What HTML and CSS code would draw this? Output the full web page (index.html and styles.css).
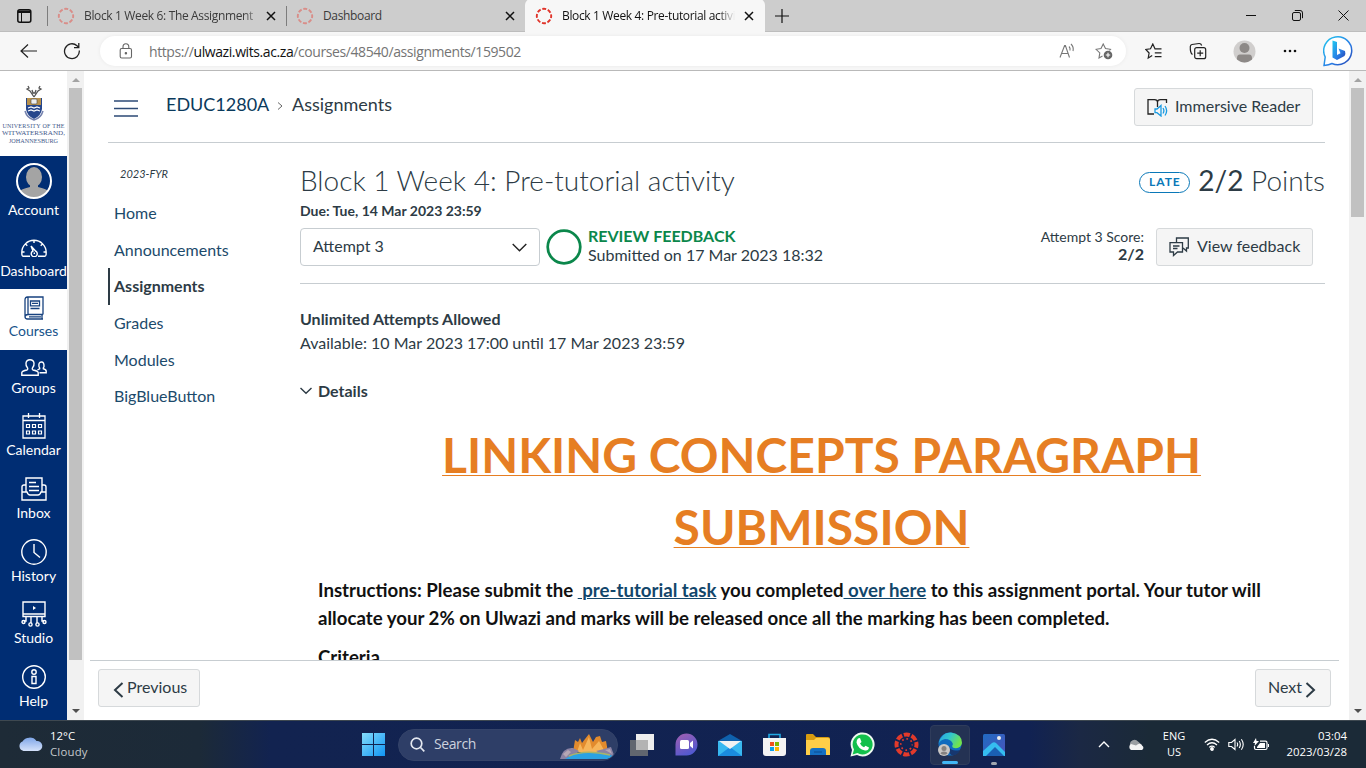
FILE: index.html
```html
<!DOCTYPE html>
<html lang="en">
<head>
<meta charset="utf-8">
<title>Block 1 Week 4: Pre-tutorial activity</title>
<link rel="stylesheet" href="styles.css">
</head>
<body>
<svg width="0" height="0" class="defs">
  <defs>
    <symbol id="x" viewBox="0 0 10 10"><path d="M1 1L9 9M9 1L1 9" fill="none" stroke="#111" stroke-width="1.5"/></symbol>
    <symbol id="ring" viewBox="0 0 18 18"><circle cx="9" cy="9" r="7.2" fill="none" stroke="currentColor" stroke-width="1.9" stroke-dasharray="3.9 1.75" stroke-dashoffset="1.9"/></symbol>
    <symbol id="up" viewBox="0 0 8 4"><path d="M0 4L4 0L8 4Z" fill="#a3a3a3"/></symbol>
    <symbol id="down" viewBox="0 0 8 4"><path d="M0 0L4 4L8 0Z" fill="#505050"/></symbol>
  </defs>
</svg>

<div class="tabs">
  <div class="tab-menu"><svg width="15" height="14" viewBox="0 0 15 14"><rect x=".8" y=".8" width="13" height="12.4" rx="2" fill="none" stroke="#111" stroke-width="1.5"/><path d="M1 1.5H14V4H1Z" fill="#111"/><path d="M4.5 4V13" stroke="#111"/></svg></div>
  <div class="sep"></div>
  <div class="tab"><svg class="fav pale" width="18" height="18"><use href="#ring"/></svg><span class="tab-title t1">Block 1 Week 6: The Assignment</span><svg width="10" height="10"><use href="#x"/></svg></div>
  <div class="sep"></div>
  <div class="tab"><svg class="fav pale" width="18" height="18"><use href="#ring"/></svg><span class="tab-title t2">Dashboard</span><svg width="10" height="10"><use href="#x"/></svg></div>
  <div class="tab active"><svg class="fav" width="18" height="18"><use href="#ring"/></svg><span class="tab-title t3">Block 1 Week 4: Pre-tutorial activity</span><svg width="10" height="10"><use href="#x"/></svg></div>
  <div class="plus"><svg width="14" height="14"><path d="M7 0V14M0 7H14" stroke="#111" stroke-width="1.2"/></svg></div>
  <div class="win">
    <span><svg width="10" height="10"><path d="M0 5.5H10" stroke="#111"/></svg></span>
    <span><svg width="11" height="11" fill="none" stroke="#111"><rect x=".5" y="2.5" width="8" height="8" rx="1.5"/><path d="M2.8 .5H8A2.4 2.4 0 0 1 10.500 3V8.200"/></svg></span>
    <span><svg width="11" height="11"><path d="M.5 .5L10.500 10.500M10.500 .5L.5 10.500" stroke="#111"/></svg></span>
  </div>
</div>

<div class="toolbar">
  <span class="btn"><svg width="17" height="14" fill="none" stroke="#222" stroke-width="1.2"><path d="M17 7H1M8 .5L1 7L8 13.500"/></svg></span>
  <span class="btn"><svg width="18" height="18" fill="none" stroke="#222" stroke-width="1.3"><path d="M16.300 8.500A7.400 7.400 0 1 1 14 3.800L15.800 5.500M15.800 1V5.700H11"/></svg></span>
  <div class="address">
    <svg width="14" height="16" fill="none" stroke="#666" stroke-width="1.1"><rect x="1.200" y="5.500" width="11.300" height="9.500" rx="1.500"/><path d="M4 5.500V4A2.900 3.200 0 0 1 9.800 4V5.500"/><circle cx="6.900" cy="10.200" r=".7" fill="#444"/></svg>
    <span class="url">https://<b>ulwazi.wits.ac.za</b>/courses/48540/assignments/159502</span>
    <svg class="aloud" width="17" height="16" fill="none" stroke="#777" stroke-width="1.100"><path d="M1 14.500L5.600 2.500H6.400L10.500 14.500M2.500 10.500H9.200M10 3.500Q11.500 5 11 7.500M12 1Q15 4 14 8"/></svg>
    <svg width="18" height="17" fill="none" stroke="#777" stroke-width="1.100"><path d="M7.500 13L4 15L4.800 9.900L1 6.300L6 5.500L8.200 1L10.500 5.500L15.500 6.300L14.500 7.500"/><circle cx="13" cy="12" r="4.300" fill="#666" stroke="none"/><path d="M13 9.800V14.200M10.800 12H15.200" stroke="#fff"/></svg>
  </div>
  <span class="btn b1"><svg width="18" height="17" fill="none" stroke="#222" stroke-width="1.200"><path d="M7.200 12.500L3.200 15L4.100 10L.8 6.500L5.500 5.800L7.800 1L10 5.800H16.500M9.800 9.800H16.500M9.800 13.600H16.500"/></svg></span>
  <span class="btn"><svg width="18" height="18" fill="none" stroke="#222" stroke-width="1.200"><rect x="5.700" y="5.700" width="11" height="11" rx="2"/><path d="M11.200 8.200V14.200M8.200 11.200H14.200M3.500 12.500Q1 11 1.300 4.500Q1.500 2.800 3 2.500L10 1.500Q12 1.300 12.700 3.500"/></svg></span>
  <span class="btn b2"><svg width="23" height="23"><circle cx="11.500" cy="11.500" r="11" fill="#d0cecd"/><circle cx="11.500" cy="8" r="5" fill="#8d8987"/><path d="M4 19.500Q3.500 14.500 7 14.500H16Q19.500 14.500 19 19.500Q11.500 25.500 4 19.500Z" fill="#8d8987"/></svg></span>
  <span class="btn b2"><svg width="14" height="4" fill="#111"><circle cx="2" cy="2" r="1.300"/><circle cx="7" cy="2" r="1.300"/><circle cx="12" cy="2" r="1.300"/></svg></span>
  <span class="btn b4"><svg width="31" height="32"><defs><linearGradient id="bg" x1="0" y1="0" x2="1" y2="1"><stop offset="0" stop-color="#21c8ef"/><stop offset=".6" stop-color="#2a7de5"/><stop offset="1" stop-color="#243fae"/></linearGradient></defs><path d="M1 30.500L2.200 22A14 14 0 1 1 9 28.500Q6 30 1 30.500Z" fill="#fff" stroke="url(#bg)" stroke-width="1.500"/><path d="M9.500 5.500L14 7V20L17.500 18.300L15.500 13.500L22 16Q23 19 21.500 21L14 25L9.500 22.500Z" fill="url(#bg)"/></svg></span>
</div>

<div class="page">
  <nav class="global">
    <div class="logo">
      <svg width="20" height="36" viewBox="0 0 20 36"><path d="M10 12L6 6L3 4L5 3L4 1M10 12L14 6L17 4L15 3L16 1M8 5L9 8H11L12 5" fill="none" stroke="#555" stroke-width="1.300"/><path d="M2 13H18V24Q17 31 10 34Q3 31 2 24Z" fill="#26468c"/><path d="M3 13H17V20H3Z" fill="#b8914b"/><rect x="7" y="14" width="6" height="5" rx="1" fill="#eee" stroke="#444" stroke-width=".6"/><path d="M4 23L7 22L10 23L13 22L16 23M4 26L7 25L10 26L13 25L16 26" fill="none" stroke="#fff" stroke-width="1.200"/><path d="M1 26Q3 33 10 35Q17 33 19 26" fill="none" stroke="#7380ad" stroke-width="1.500"/></svg>
      <span class="l1">UNIVERSITY OF THE</span><span class="l2">WITWATERSRAND,</span><span class="l3">JOHANNESBURG</span>
    </div>
    <div class="item account"><svg width="36" height="36"><defs><clipPath id="av"><circle cx="18" cy="18" r="16.500"/></clipPath></defs><circle cx="18" cy="18" r="17" fill="#002d73"/><g clip-path="url(#av)" fill="#a4a4a4"><ellipse cx="18" cy="14" rx="8" ry="10"/><path d="M14 20H22V24Q32 26 34 30V36H2V30Q4 26 14 24Z"/></g><circle cx="18" cy="18" r="17" fill="none" stroke="#fff" stroke-width="2"/></svg><span>Account</span></div>
    <div class="item dash"><svg width="26" height="18" fill="none" stroke="#fff" stroke-width="1.400"><path d="M9 17.200H2Q.8 17.200.8 13.500A12.200 12.200 0 0 1 25.200 13.500Q25.200 17.200 24 17.200H17M13 1V4M4.500 5L6.300 6.800M21.500 5L19.700 6.800M1 13H3.500M22.500 13H25M10 7L12 12A3 3 0 1 0 14.500 12L10 7M13.300 13.500V15"/></svg><span>Dashboard</span></div>
    <div class="item courses"><svg width="20" height="24" fill="none" stroke="#17427f" stroke-width="1.300"><path d="M19 18.500V1H3.500Q1 1 1 4V20.500Q1 23 3.500 23H19M1 20.500Q1.500 18.500 4 18.500H19M18 18.500V23M4 1V18M6.500 5H15.500V9.800H6.500ZM6.500 12.500H15.500M8 7.400H14M5 20.800H17"/></svg><span>Courses</span></div>
    <div class="item groups"><svg width="26" height="17" fill="none" stroke="#fff" stroke-width="1.400"><path d="M.8 16.200V13.500Q1 12 6 11Q7.500 10 6 8Q4.800 6.500 5 4Q5.500.8 9 .8T13 4Q13.200 6.500 12 8Q10.500 10 12 11Q17 12 17.200 13.500V16.200ZM16.500 10.800L18.700 9.800Q18.900 9 18 7.600Q17.300 3.200 20.300 3T23 7.600Q22 9 22.300 9.800Q25.200 10.500 25.200 12.200V13.800H18.500"/></svg><span>Groups</span></div>
    <div class="item cal"><svg width="24" height="26" fill="none" stroke="#fff" stroke-width="1.300"><path d="M1 3H23V25H1ZM1 7.500H23M6.500 0V5M17.500 0V5"/><path d="M4.500 11.500H7.500V14.500H4.500ZM10.500 11.500H13.500V14.500H10.500ZM16.500 11.500H19.500V14.500H16.500ZM4.500 18H7.500V21H4.500ZM10.500 18H13.500V21H10.500ZM16.500 18H19.500V21H16.500Z" stroke-width="1.200"/></svg><span>Calendar</span></div>
    <div class="item inbox"><svg width="26" height="24" fill="none" stroke="#fff" stroke-width="1.400"><path d="M5 15V1H21V15M5 8H3Q1 8 1 10V23H25V10Q25 8 23 8H21M1 15H6Q7 18 9 18H17Q19 18 20 15H25M8 5.500H15M8 9.500H18M8 13.500H18"/></svg><span>Inbox</span></div>
    <div class="item hist"><svg width="26" height="26" fill="none" stroke="#fff" stroke-width="1.400"><circle cx="13" cy="13" r="12.200"/><path d="M13 5V13.500L19 18.500"/></svg><span>History</span></div>
    <div class="item studio"><svg width="26" height="26" fill="none" stroke="#fff" stroke-width="1.400"><path d="M2 1H24V15.500H2ZM2 13H24M10 16V22M16 16V22M5 16V20H3M21 16V20H23"/><circle cx="2.500" cy="21" r="1.500"/><circle cx="9.500" cy="23.500" r="1.600"/><circle cx="16.500" cy="23.500" r="1.600"/><circle cx="23.500" cy="21" r="1.500"/><path d="M12 5L15 7L12 9Z" fill="#fff" stroke="none"/></svg><span>Studio</span></div>
    <div class="item help"><svg width="26" height="24" fill="none" stroke="#fff" stroke-width="1.400"><circle cx="13" cy="12" r="11.300"/><circle cx="13" cy="7" r="2.200"/><path d="M11 11.500H15V18.500H11Z"/></svg><span>Help</span></div>
  </nav>
  <div class="scroll left"><svg width="8" height="4"><use href="#up"/></svg><div class="thumb"></div><svg width="8" height="4"><use href="#down"/></svg></div>

  <main>
    <div class="view">
      <header class="crumbs">
        <svg class="burger" width="24" height="17"><path d="M0 1H24M0 8.500H24M0 16H24" stroke="#2d4a75" stroke-width="1.600"/></svg>
        <span class="crumb c1">EDUC1280A</span>
        <svg class="chev" width="6" height="8" fill="none" stroke="#666"><path d="M1 .5L5 4L1 7.500"/></svg>
        <span class="crumb c2">Assignments</span>
        <button class="button reader"><svg width="21" height="19" fill="none"><path d="M10.500 4Q10.500 1.700 7.500 1.700H1V16H7M10.500 9V4Q10.500 1.700 13.500 1.700H19.500V5" stroke="#222" stroke-width="1.300"/><path d="M8 11H10L14 7.500V18L10 14.700H8ZM16 10Q17.800 12.700 16 15.500M18 8Q21.300 12.700 18 17.500" stroke="#199be2" stroke-width="1.300"/></svg><span>Immersive Reader</span></button>
      </header>
      <div class="cols">
        <aside>
          <div class="term">2023-FYR</div>
          <a>Home</a><a>Announcements</a><a class="on">Assignments</a><a>Grades</a><a>Modules</a><a>BigBlueButton</a>
        </aside>
        <section>
          <div class="head">
            <h1>Block 1 Week 4: Pre-tutorial activity</h1>
            <div class="points"><span class="late">LATE</span><span class="score"><b>2/2</b> Points</span></div>
          </div>
          <div class="due">Due: Tue, 14 Mar 2023 23:59</div>
          <div class="status">
            <div class="select"><span>Attempt 3</span><svg width="15" height="9" fill="none" stroke="#222" stroke-width="1.400"><path d="M.7 1L7.500 7.800L14.300 1"/></svg></div>
            <svg class="circle" width="36" height="36"><circle cx="18" cy="18" r="16.300" fill="none" stroke="#0b874b" stroke-width="2.700"/></svg>
            <div class="review"><b>REVIEW FEEDBACK</b><span>Submitted on 17 Mar 2023 18:32</span></div>
            <div class="attempt"><span>Attempt 3 Score:</span><b>2/2</b></div>
            <button class="button feedback"><svg width="20" height="20" fill="none" stroke="#2d3b45" stroke-width="1.300"><path d="M1 5.700H13.500V15H8.500L4.500 18.500V15H1ZM7.500 5V1H19.300V11H17.500V14L14 11M4 9H10.500M4 11.500H8.500"/></svg><span>View feedback</span></button>
          </div>
          <div class="allowed">Unlimited Attempts Allowed</div>
          <div class="avail">Available: 10 Mar 2023 17:00 until 17 Mar 2023 23:59</div>
          <div class="details"><svg width="12" height="8" fill="none" stroke="#2d3b45" stroke-width="1.400"><path d="M.5 1L6 6.300L11.500 1"/></svg><b>Details</b></div>
          <article>
            <h2><span>LINKING CONCEPTS PARAGRAPH</span><br><span>SUBMISSION</span></h2>
            <p><span>Instructions: Please submit the <a>&nbsp;pre-tutorial task</a> you completed<a> over here</a> to this assignment portal. Your tutor will</span><br><span>allocate your 2% on Ulwazi and marks will be released once all the marking has been completed.</span></p>
            <p class="criteria">Criteria</p>
          </article>
        </section>
      </div>
    </div>
    <footer>
      <button class="button prev"><svg width="11" height="16" fill="none" stroke="#2d3b45" stroke-width="2"><path d="M9.500 1L2 8L9.500 15"/></svg><span>Previous</span></button>
      <button class="button next"><span>Next</span><svg width="11" height="16" fill="none" stroke="#2d3b45" stroke-width="2"><path d="M1.500 1L9 8L1.500 15"/></svg></button>
    </footer>
  </main>
  <div class="scroll right"><svg width="8" height="4"><use href="#up"/></svg><div class="thumb"></div><svg width="8" height="4"><use href="#down"/></svg></div>
</div>

<div class="taskbar">
  <svg class="weather" width="25" height="17"><defs><linearGradient id="cl" x1="0" y1="0" x2="0" y2="1"><stop offset="0" stop-color="#7fa6e8"/><stop offset="1" stop-color="#d5e2fa"/></linearGradient></defs><path d="M5.500 16A5 5 0 0 1 4.500 6.500A8 7 0 0 1 18.500 6A5 5 0 0 1 20 16Z" fill="url(#cl)"/></svg>
  <div class="temp"><span>12°C</span><span class="dim">Cloudy</span></div>
  <svg class="start" width="23" height="23"><defs><linearGradient id="wn" gradientUnits="userSpaceOnUse" x1="0" y1="0" x2="23" y2="23"><stop offset="0" stop-color="#85ddfb"/><stop offset="1" stop-color="#1095f5"/></linearGradient></defs><path d="M0 0H11V11H0ZM12 0H23V11H12ZM0 12H11V23H0ZM12 12H23V23H12Z" fill="url(#wn)"/></svg>
  <div class="search"><svg width="15" height="15" fill="none" stroke="#e4e8f0" stroke-width="1.700"><circle cx="6.500" cy="6.500" r="5.300"/><path d="M10.500 10.500L14.300 14.300"/></svg><span>Search</span>
    <svg class="art" width="54" height="25"><path d="M13 18L15 6L18 8L20 4L22 9L25 5L29 0L33 8L36 3L40 2L42 8L46 7L48 18Z" fill="#e28b2d"/><path d="M17 18L20 9L23 16L29 3L32 15L39 7L45 18Z" fill="#f6b55a"/><path d="M0 25Q3 13 13 14L19 17L11 25ZM36 17L44 15L51 13L54 21L50 24Z" fill="#8b82a3"/><path d="M3 20L8 16L11 18L6 23ZM45 16L50 15L52 20Z" fill="#b6a7b4"/><path d="M5 25Q16 17 32 18Q45 18 53 22L48 25Z" fill="#2aa2e4"/><path d="M9 22Q25 15 50 21" fill="none" stroke="#a9b36b" stroke-width="1.500"/></svg>
  </div>
  <div class="apps">
    <span><svg width="24" height="22"><path d="M6 0H24V16H6Z" fill="#eee"/><path d="M0 6H18V22H0Z" fill="#707274" opacity=".85"/><path d="M6 6H18V16H6Z" fill="#b3b3b3"/></svg></span>
    <span><svg width="23" height="23"><defs><linearGradient id="ch" x1="0" y1="0" x2=".5" y2="1"><stop offset="0" stop-color="#a45fb0"/><stop offset="1" stop-color="#5259cf"/></linearGradient></defs><path d="M.5 22.500V11.500A11 11 0 1 1 11.500 22.500Z" fill="url(#ch)"/><rect x="5" y="7" width="9" height="9" rx="1.500" fill="#fff"/><path d="M15 10L18 7.500V15.500L15 13Z" fill="#fff"/></svg></span>
    <span><svg width="24" height="22"><path d="M0 7L12 0L24 7V12H0Z" fill="#0f61ad"/><path d="M0 7H24V22H0Z" fill="#38b8f0"/><path d="M0 22L12 13L24 22Z" fill="#1a8bdf"/><path d="M1 7H23L12 15Z" fill="#f2f2f2"/></svg></span>
    <span><svg width="23" height="23"><path d="M6 5V1.500H17V5" fill="none" stroke="#21a8e3" stroke-width="1.600"/><path d="M0 5H23V20Q23 23 20 23H3Q0 23 0 20Z" fill="#f3f3f3"/><path d="M7 9H11V13H7Z" fill="#f0501e"/><path d="M12 9H16V13H12Z" fill="#7db801"/><path d="M7 14H11V18H7Z" fill="#08a1ec"/><path d="M12 14H16V18H12Z" fill="#fdb500"/></svg></span>
    <span><svg width="24" height="22"><path d="M0 1Q0 0 1 0H7L10 3H22Q24 3 24 5V10H0Z" fill="#d79b10"/><path d="M0 6H8L10 4H22Q24 4 24 6V21H0Z" fill="#ffce48"/><path d="M4 21V17Q4 14 7 14H17Q20 14 20 17V21Z" fill="#1570c3"/><path d="M8 18H16" stroke="#0c4d91"/></svg></span>
    <span><svg width="25" height="25"><path d="M.5 24.500L2 18A12 12 0 1 1 7 23Z" fill="#eef8f0"/><path d="M2.600 22.400L4 17.500A10 10 0 1 1 7.500 21Z" fill="#12c04b"/><path d="M8 6.500L10 6L11.500 10L10 11.500Q11.500 14.500 14 15.200L15.500 13.700L19 15.500Q18.500 19 15 18.500Q8 17 6.500 10.500Q6.500 8 8 6.500Z" fill="#fff"/></svg></span>
    <span><svg width="25" height="25" fill="none" stroke="#e23a2b"><circle cx="12.500" cy="12.500" r="10" stroke-width="4" stroke-dasharray="6.100 1.754" stroke-dashoffset="3"/><circle cx="12.500" cy="12.500" r="5.700" stroke-width="1.700" stroke-dasharray="1.700 2.776" stroke-dashoffset=".8"/></svg></span>
    <span class="live"><svg width="26" height="25"><defs><linearGradient id="eg" x1="0" y1="0" x2="1" y2=".4"><stop offset="0" stop-color="#2b9ee4"/><stop offset=".5" stop-color="#31c5cd"/><stop offset="1" stop-color="#72e34c"/></linearGradient></defs><circle cx="13" cy="12" r="11.500" fill="#0f6abe"/><path d="M1.500 12Q4 0 14 .5Q25 2 25 11Q24 17 17 16Q14 15 16 12Q14 7 8 7Q3 8 1.500 12Z" fill="url(#eg)"/><path d="M12 15Q15 20 23 18Q21 23 15 23.500Q11 21 12 15Z" fill="#17376f"/><circle cx="7" cy="18" r="6" fill="#c9c7c5"/><circle cx="7" cy="16.500" r="2.500" fill="#858280"/><path d="M3.500 21.500Q4 19.500 7 19.500T10.500 21.500Q7 24 3.500 21.500Z" fill="#858280"/></svg><i></i></span>
    <span class="idle"><svg width="22" height="22"><defs><linearGradient id="ph" x1="0" y1="0" x2="1" y2="1"><stop offset="0" stop-color="#206bc2"/><stop offset="1" stop-color="#4a53bb"/></linearGradient></defs><rect width="22" height="22" rx="1.500" fill="url(#ph)"/><path d="M0 17L9 9Q11 7.500 13 9L22 18V22H0Z" fill="#35bdf0"/><path d="M3 22L12 13L21 22Z" fill="#1a5fb4"/><circle cx="16" cy="4" r="2" fill="#eee"/></svg><i></i></span>
  </div>
  <svg class="caret" width="12" height="7" fill="none" stroke="#fff" stroke-width="1.400"><path d="M1 6L6 1L11 6"/></svg>
  <svg class="cloud" width="17" height="11"><path d="M3 6A4.500 4.500 0 0 1 11 2.500L15 6V9H3Z" fill="#9b9fa3"/><path d="M4 11A3.500 3.500 0 0 1 4 5L9 6.500Q13 3 15 6.500A2.500 2.500 0 0 1 15 11Z" fill="#f4f4f4"/></svg>
  <div class="lang"><span>ENG</span><span>US</span></div>
  <svg class="wifi" width="16" height="13" fill="none" stroke="#fff" stroke-width="1.200"><path d="M.8 4.500Q8-2 15.200 4.500M3 7Q8 2.500 13 7M5.200 9.400Q8 7 10.800 9.400"/><circle cx="8" cy="11" r="1.300" fill="#fff"/></svg>
  <svg class="vol" width="17" height="13" fill="none" stroke="#fff" stroke-width="1.100"><path d="M.8 4.500H3.500L7 1.500V11.500L3.500 8.500H.8ZM9 4.500Q10.300 6.500 9 8.500M11.200 3Q13.500 6.500 11.200 10M13.400 1.200Q17 6.500 13.400 11.800"/></svg>
  <svg class="bat" width="17" height="13" fill="none" stroke="#fff" stroke-width="1.200"><path d="M7 3.200H12.500Q14 3.200 14 5V10Q14 11.500 12.500 11.500H3Q1.500 11.500 1.500 10V8"/><path d="M4 9V10H12V5H7ZM15 6H16V9H15ZM3 0L0 5H2L1.500 8L6 3H3.500Z" fill="#fff" stroke="none"/></svg>
  <div class="clock"><span>03:04</span><span>2023/03/28</span></div>
</div>
</body>
</html>
```

FILE: styles.css
```css
* { box-sizing: border-box; }
body { margin: 0; width: 1366px; height: 768px; overflow: hidden; display: flex; flex-direction: column; font-family: Lato, sans-serif; font-size: 16px; color: #2d3b45; background: #fff; }
svg { display: block; flex: none; }
.defs { position: absolute; }
span { white-space: nowrap; }

/* Browser tabs */
.tabs { height: 32px; flex: none; display: flex; align-items: center; background: #cdcdcd; border-bottom: 1px solid #bdbdbd; font: 12px "Open Sans", sans-serif; color: #3b3b3b; }
.tab-menu { width: 47px; padding-left: 17px; }
.sep { width: 1px; height: 20px; background: #7d7d7d; }
.tab { width: 238px; height: 32px; display: flex; align-items: center; padding: 0 10px 0 9px; }
.tab-title { flex: 1; margin: 0 9px 0 9px; overflow: hidden; letter-spacing: -0.35px; }
.t1 { mask-image: linear-gradient(90deg, #000 92%, rgba(0,0,0,.3) 100%); }
.t3 { mask-image: linear-gradient(90deg, #000 90%, transparent 100%); }
.fav { color: #e0342a; }
.pale { color: #d98d88; }
.active { width: 240px; height: 33px; background: #f7f7f7; border-radius: 6px 6px 0 0; color: #111; padding-left: 10px; padding-right: 11px; }
.plus { width: 34px; padding-left: 10px; }
.win { margin-left: auto; display: flex; }
.win span { width: 46px; display: flex; justify-content: center; }

/* Address bar */
.toolbar { height: 39px; flex: none; display: flex; align-items: center; background: #f7f7f7; border-bottom: 1px solid #b9b9b9; padding-left: 6px; }
.btn { width: 44px; display: flex; justify-content: center; }
.address { width: 1026px; height: 30px; margin-left: 6px; border-radius: 15px; background: #fff; box-shadow: 0 0 4px rgba(0,0,0,.06); display: flex; align-items: center; padding: 0 13px 0 19px; }
.url { margin-left: 16px; font: 14px "Open Sans", sans-serif; color: #747474; letter-spacing: -0.41px; }
.url b { font-weight: 400; color: #111; }
.aloud { margin-left: auto; margin-right: 19px; }
.b1 { margin-left: 6px; }
.b2 { margin-left: 2px; }
.b4 { margin-left: 4px; }

/* Page frame */
.page { height: 649px; flex: none; display: flex; }
.global { width: 67px; background: #002d73; color: #fff; flex: none; }
.logo { height: 85px; background: #fff; display: flex; flex-direction: column; align-items: center; padding-top: 14px; font-family: "Liberation Serif", serif; color: #44598a; line-height: 7px; }
.logo svg { margin-bottom: 2px; }
.l1 { font-size: 6px; letter-spacing: .25px; }
.l2 { font-size: 7.1px; }
.l3 { font-size: 6.2px; }
.item { display: flex; flex-direction: column; align-items: center; justify-content: flex-end; padding-bottom: 10px; height: 63px; font-size: 14px; line-height: 18px; }
.item svg { margin-bottom: 2px; }
.account { height: 73px; }
.dash { height: 60px; padding-bottom: 9px; }
.dash svg { margin-bottom: 5px; }
.courses { height: 61px; background: #fff; color: #17538a; }
.groups { height: 57px; }
.groups svg, .inbox svg, .help svg { margin-bottom: 3px; }
.cal, .studio { height: 62px; }
.scroll { width: 17px; background: #f1f1f1; display: flex; flex-direction: column; align-items: center; padding: 7px 0; flex: none; }
.thumb { width: 13px; height: 572px; margin: 6px 0 auto; background: #c1c1c1; }
.right .thumb { height: 129px; }

main { width: 1265px; display: flex; flex-direction: column; }
.view { height: 589px; overflow: hidden; padding: 0 24px; }
.crumbs { height: 72px; border-bottom: 1px solid #c7cdd1; display: flex; padding: 17px 12px 0 6px; }
.burger { margin-top: 12px; }
.crumb { font-size: 18px; line-height: 33px; }
.c1 { margin-left: 28px; width: 103px; color: #0a3a5c; }
.chev { margin: 14px 9px 0 8px; }
.button { font: 16px/20px Lato, sans-serif; color: #2d3b45; background: #f5f5f5; border: 1px solid #d6d9db; border-radius: 3px; height: 38px; display: flex; align-items: center; padding: 0; flex: none; }
.button span { padding-bottom: 2px; }
.reader { width: 179px; margin-left: auto; padding-left: 12px; }
.reader svg { margin-right: 7px; }
.cols { display: flex; }
aside { width: 192px; flex: none; padding-top: 22px; }
.term { font-size: 11px; font-style: italic; line-height: 18px; padding-left: 12px; margin-bottom: 12px; }
aside a { display: block; height: 36.7px; line-height: 36.2px; padding-left: 6px; color: #1c4a6b; }
aside a.on { border-left: 2px solid #2d3b45; padding-left: 4px; font-weight: 700; color: #2d3b45; }

/* Assignment */
section { width: 1025px; flex: none; }
.head { display: flex; justify-content: space-between; padding-top: 19px; height: 57px; }
h1 { margin: 0; font-size: 28px; font-weight: 300; line-height: 36px; white-space: nowrap; }
.points { display: flex; align-items: center; height: 36px; }
.late { width: 51px; height: 21px; margin: 5px 8px 0 0; border: 1px solid #0a78b8; border-radius: 11px; color: #0a78b8; font-size: 12px; font-weight: 700; line-height: 18px; text-align: center; letter-spacing: 1px; }
.score { font-size: 28px; font-weight: 300; }
.score b { font-weight: 400; }
.due { font-size: 14px; font-weight: 700; line-height: 22px; height: 28px; }
.status { height: 56px; display: flex; border-bottom: 1px solid #c7cdd1; padding-right: 12px; }
.select { width: 240px; height: 38px; border: 1px solid #c7cdd1; border-radius: 4px; display: flex; align-items: center; justify-content: space-between; padding: 0 12px; }
.select span { padding-bottom: 3px; }
.circle { margin: 1px 6px 0; }
.review { display: flex; flex-direction: column; line-height: 19px; margin-top: -2px; }
.review b { color: #0b874b; }
.attempt { margin: 0 12px 0 auto; display: flex; flex-direction: column; align-items: flex-end; font-size: 14px; line-height: 18px; }
.attempt b { font-size: 16px; line-height: 18px; margin-top: -1px; }
.feedback { width: 157px; padding-left: 12px; }
.feedback svg { margin-right: 8px; }
.allowed { margin-top: 23px; font-weight: 700; line-height: 24px; }
.avail { line-height: 24px; }
.details { margin-top: 24px; height: 24px; display: flex; align-items: center; gap: 6px; }
.details b { padding-bottom: 2px; }
article { width: 1007px; padding: 16px 0 0 18px; color: #111; }
h2 { margin: 0 0 13px; width: 1007px; font-size: 48px; line-height: 72px; text-align: center; color: #e67e23; }
h2 span { text-decoration: underline 1px #e67e23; text-decoration-skip-ink: none; text-underline-offset: 2px; }
p { margin: 0 0 11px; font-size: 18.66px; font-weight: 700; line-height: 28px; }
p a { color: #12466b; text-decoration: underline; text-decoration-thickness: 1px; }
footer { height: 60px; margin: 0 10px 0 6px; border-top: 1px solid #c7cdd1; padding: 8px 8px 0; display: flex; justify-content: space-between; }
.prev { width: 102px; padding-left: 14px; }
.prev svg { margin-right: 3px; margin-top: 3px; }
.next { width: 76px; padding-left: 12px; }
.next svg { margin: 3px 0 0 3px; }

/* Taskbar */
.taskbar { height: 48px; flex: none; display: flex; align-items: center; color: #fff; font: 11.4px/16px "Open Sans", sans-serif; border-top: 1px solid #3e4850; background: linear-gradient(90deg, #1e2b37 0, #1c2a38 200px, #122350 270px, #112252 1030px, #1b2844 1080px, #1b2a37 1150px); }
.taskbar > div { display: flex; }
.weather { margin-left: 18px; margin-bottom: 2px; }
.taskbar .temp { width: 60px; margin-left: 7px; flex-direction: column; padding-bottom: 2px; }
.dim { color: #c5c9cc; letter-spacing: .2px; }
.start { margin-left: 252px; }
.taskbar .search { width: 220px; height: 32px; margin-left: 13px; border-radius: 16px; background: #2e3e67; align-items: center; padding-left: 11px; font-size: 14px; color: #cdd2de; overflow: hidden; border: 1px solid #344369; }
.search span { margin-left: 9px; letter-spacing: -.4px; padding-bottom: 2px; }
.art { margin-left: auto; margin-right: 3px; margin-top: 3px; }
.taskbar .apps { margin-left: 2px; }
.apps span { width: 40px; height: 40px; margin: 0 2px; display: flex; align-items: center; justify-content: center; position: relative; }
.live { background: #243253; border: 1px solid #2f3c5b; border-radius: 4px; }
.apps i { position: absolute; bottom: 0; width: 16px; height: 3px; border-radius: 2px; background: #43b6f5; }
.apps .idle i { width: 6px; background: #a1a7b0; }
.caret { margin-left: 82px; }
.cloud { margin-left: 17px; }
.taskbar .lang { width: 30px; margin-left: 15px; flex-direction: column; align-items: center; font-size: 11px; padding-bottom: 1px; }
.wifi { margin-left: 15px; }
.vol { margin-left: 8px; }
.bat { margin-left: 8px; }
.taskbar .clock { margin-left: auto; margin-right: 19px; flex-direction: column; align-items: flex-end; padding-bottom: 2px; }
```
